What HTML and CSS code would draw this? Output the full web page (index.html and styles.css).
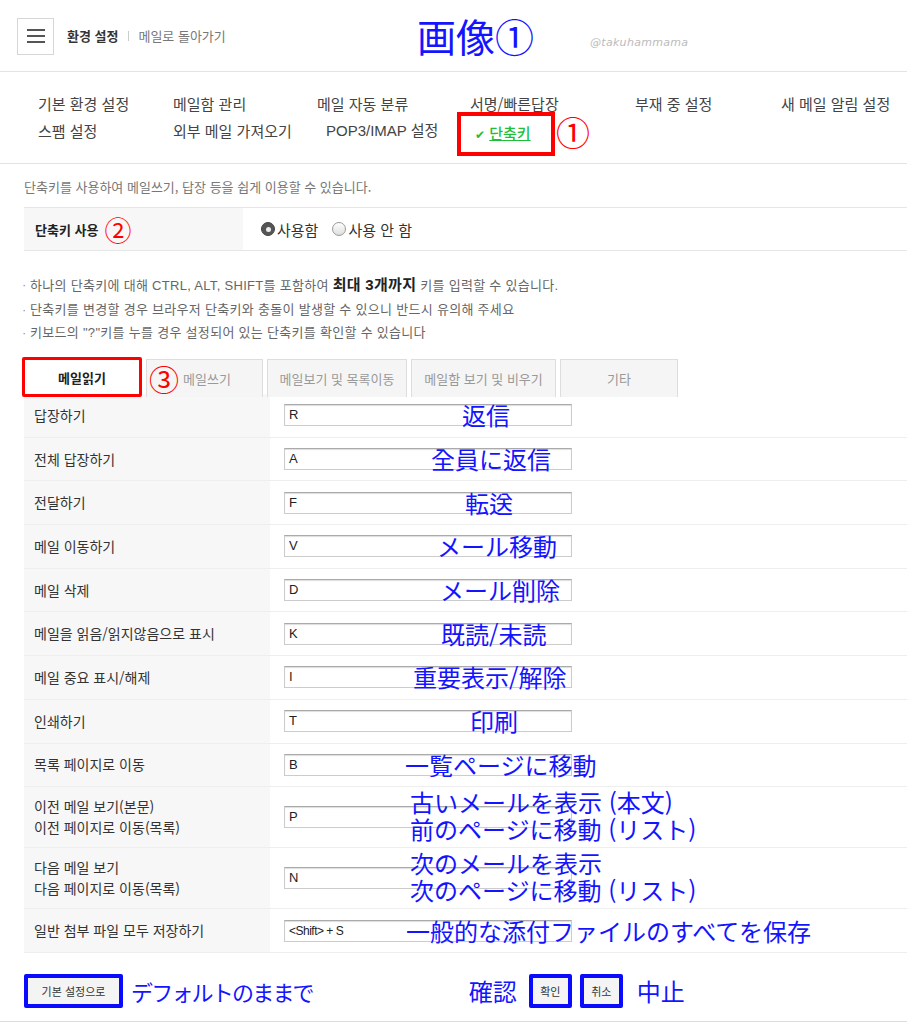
FILE: index.html
```html
<!DOCTYPE html>
<html lang="ko">
<head>
<meta charset="utf-8">
<link rel="stylesheet" href="styles.css">
</head>
<body>
<header class="top">
  <div class="menu-btn"><span></span><span></span><span></span></div>
  <span class="title">환경 설정</span>
  <span class="sep"></span>
  <span class="back">메일로 돌아가기</span>
  <span class="ann-big">画像①</span>
  <span class="credit">@takuhammama</span>
</header>

<nav class="nav">
  <div class="nav-row">
    <a class="c1">기본 환경 설정</a>
    <a class="c2">메일함 관리</a>
    <a class="c3">메일 자동 분류</a>
    <a class="c4">서명/빠른답장</a>
    <a class="c5">부재 중 설정</a>
    <a class="c6">새 메일 알림 설정</a>
  </div>
  <div class="nav-row">
    <a class="c1">스팸 설정</a>
    <a class="c2">외부 메일 가져오기</a>
    <a class="c3b">POP3/IMAP 설정</a>
    <a class="c4b active"><span class="check">✔</span> <u>단축키</u></a>
    <span class="circ red nav-circ">①</span>
  </div>
</nav>

<main class="content">
  <p class="desc">단축키를 사용하여 메일쓰기, 답장 등을 쉽게 이용할 수 있습니다.</p>
  <div class="use-row">
    <div class="use-label">단축키 사용 <span class="circ red small-circ">②</span></div>
    <div class="use-opts">
      <span class="radio on"></span><span class="opt">사용함</span>
      <span class="radio"></span><span class="opt">사용 안 함</span>
    </div>
  </div>
  <ul class="notes">
    <li>하나의 단축키에 대해 CTRL, ALT, SHIFT를 포함하여 <b>최대 3개까지</b> 키를 입력할 수 있습니다.</li>
    <li>단축키를 변경할 경우 브라우저 단축키와 충돌이 발생할 수 있으니 반드시 유의해 주세요</li>
    <li>키보드의 "?"키를 누를 경우 설정되어 있는 단축키를 확인할 수 있습니다</li>
  </ul>

  <div class="tabs">
    <div class="tab active">메일읽기</div>
    <div class="tab t2"><span class="circ red tab-circ">③</span>메일쓰기</div>
    <div class="tab t3">메일보기 및 목록이동</div>
    <div class="tab t4">메일함 보기 및 비우기</div>
    <div class="tab t5">기타</div>
  </div>

  <div class="keys">
    <div class="krow"><div class="kl">답장하기</div><div class="kr"><div class="inp">R</div><span class="ann" style="left:192px">返信</span></div></div>
    <div class="krow"><div class="kl">전체 답장하기</div><div class="kr"><div class="inp">A</div><span class="ann" style="left:161px">全員に返信</span></div></div>
    <div class="krow"><div class="kl">전달하기</div><div class="kr"><div class="inp">F</div><span class="ann" style="left:195px">転送</span></div></div>
    <div class="krow"><div class="kl">메일 이동하기</div><div class="kr"><div class="inp">V</div><span class="ann" style="left:167px">メール移動</span></div></div>
    <div class="krow"><div class="kl">메일 삭제</div><div class="kr"><div class="inp">D</div><span class="ann" style="left:170px">メール削除</span></div></div>
    <div class="krow"><div class="kl">메일을 읽음/읽지않음으로 표시</div><div class="kr"><div class="inp">K</div><span class="ann" style="left:171px">既読/未読</span></div></div>
    <div class="krow"><div class="kl">메일 중요 표시/해제</div><div class="kr"><div class="inp">I</div><span class="ann" style="left:143px">重要表示/解除</span></div></div>
    <div class="krow"><div class="kl">인쇄하기</div><div class="kr"><div class="inp">T</div><span class="ann" style="left:200px">印刷</span></div></div>
    <div class="krow"><div class="kl">목록 페이지로 이동</div><div class="kr"><div class="inp">B</div><span class="ann" style="left:135px">一覧ページに移動</span></div></div>
    <div class="krow tall"><div class="kl">이전 메일 보기(본문)<br>이전 페이지로 이동(목록)</div><div class="kr"><div class="inp">P</div><span class="ann two" style="left:140px">古いメールを表示 (本文)<br>前のページに移動 (リスト)</span></div></div>
    <div class="krow tall"><div class="kl">다음 메일 보기<br>다음 페이지로 이동(목록)</div><div class="kr"><div class="inp">N</div><span class="ann two" style="left:140px">次のメールを表示<br>次のページに移動 (リスト)</span></div></div>
    <div class="krow"><div class="kl">일반 첨부 파일 모두 저장하기</div><div class="kr"><div class="inp small">&lt;Shift&gt; + S</div><span class="ann" style="left:136px">一般的な添付ファイルのすべてを保存</span></div></div>
  </div>

  <div class="bottom">
    <button class="btn blue-box wide">기본 설정으로</button>
    <span class="ann-inline first">デフォルトのままで</span>
    <span class="spacer"></span>
    <span class="ann-inline">確認</span>
    <button class="btn blue-box sm">확인</button>
    <button class="btn blue-box sm">취소</button>
    <span class="ann-inline">中止</span>
  </div>
</main>
<div class="endline"></div>
</body>
</html>
```

FILE: styles.css
```css
* { box-sizing: border-box; }
html, body { margin: 0; padding: 0; background: #fff; }
body {
  width: 907px;
  height: 1024px;
  overflow: hidden;
  position: relative;
  font-family: "Liberation Sans", "Noto Sans CJK KR", sans-serif;
  color: #333;
}

.top {
  height: 72px;
  border-bottom: 1px solid #e3e3e3;
  display: flex;
  align-items: center;
  padding-left: 17px;
  position: relative;
}
.menu-btn {
  width: 37px; height: 37px;
  border: 1px solid #d6d6d6;
  display: flex; flex-direction: column; justify-content: center; align-items: center;
  gap: 4px;
  margin-top: 1px;
}
.menu-btn span { width: 18px; height: 2px; background: #555; display: block; }
.title { margin-left: 13px; font-size: 13px; font-weight: bold; color: #333; }
.sep { width: 1px; height: 10px; background: #ccc; margin: 0 9px 0 10px; }
.back { font-size: 13px; color: #777; }
.ann-big {
  position: absolute; left: 417px; top: 10px;
  font-family: "Noto Sans CJK JP", sans-serif;
  font-size: 39px; color: #1414ff; line-height: 50px;
}
.credit {
  position: absolute; left: 590px; top: 36px;
  font-size: 11px; font-style: italic; color: #bbb; letter-spacing: 0.3px;
  font-family: "DejaVu Sans", sans-serif;
}

.nav {
  height: 92px;
  border-bottom: 1px solid #e3e3e3;
  padding-top: 22px;
  position: relative;
}
.nav-row { position: relative; height: 27px; font-size: 15px; font-family: "Noto Sans CJK KR", sans-serif; color: #444; }
.nav-row a { position: absolute; top: 0; line-height: 20px; white-space: nowrap; }
.nav-row .c1 { left: 38px; }
.nav-row .c2 { left: 173px; }
.nav-row .c3 { left: 317px; }
.nav-row .c3b { left: 326px; font-family: "Liberation Sans", "Noto Sans CJK KR", sans-serif; }
.nav-row .c4 { left: 470px; }
.nav-row .c5 { left: 635px; }
.nav-row .c6 { left: 781px; }
.nav-row .active {
  color: #1fbf3a;
  font-weight: 500;
  outline: 4px solid #f00;
  padding: 7px 20px 8px 14px;
  top: -5px;
  left: 461px;
  line-height: 20px;
}
.check { font-size: 12px; }
.circ { font-family: "Noto Sans CJK JP", sans-serif; line-height: 1; }
.red { color: #f00; }
.nav-circ { position: absolute; left: 556px; top: -6px; font-size: 34px; }

.content { padding: 0 0 0 24px; }
.desc { margin: 15px 0 0 0; font-size: 13px; color: #777; font-family: "Noto Sans CJK KR", sans-serif; line-height: 16px; }
.use-row {
  margin-top: 12px;
  height: 44px;
  display: flex;
  border-top: 1px solid #e6e6e6;
  border-bottom: 1px solid #e6e6e6;
}
.use-label {
  width: 219px; background: #f7f7f7;
  display: flex; align-items: center;
  padding-left: 11px;
  font-size: 13px; font-weight: bold; color: #222;
  font-family: "Noto Sans CJK KR", sans-serif;
}
.small-circ { font-size: 27px; margin-left: 6px; font-weight: normal; }
.use-opts {
  display: flex; align-items: center; padding-left: 18px;
  font-size: 15px; font-family: "Noto Sans CJK KR", sans-serif; color: #333;
}
.radio {
  width: 14px; height: 14px; border-radius: 50%;
  border: 1px solid #999; background: linear-gradient(#fff, #ddd);
  display: inline-block; position: relative;
}
.radio.on { background: #555; border-color: #444; }
.radio.on::after {
  content: ""; position: absolute; left: 3.5px; top: 3.5px; width: 5px; height: 5px; border-radius: 50%; background: #eee;
}
.opt { margin: 0 14px 0 2px; }

.notes {
  list-style: none; margin: 26px 0 0 0; padding: 0;
  font-size: 13px; color: #666; font-family: "Liberation Sans", "Noto Sans CJK KR", sans-serif;
  letter-spacing: 0.3px;
}
.notes li { line-height: 16px; margin-bottom: 7.5px; position: relative; padding-left: 8px; margin-left: -2px; }
.notes li::before { content: "·"; position: absolute; left: 0; top: 0; color: #999; }
.notes b { font-size: 15px; color: #222; }

.tabs {
  display: flex; gap: 4px; margin-top: 16px; margin-left: -2px; height: 40px;
  font-family: "Noto Sans CJK KR", sans-serif;
}
.tab {
  height: 38px; display: flex; align-items: center; justify-content: center;
  border: 1px solid #ddd; border-bottom: none; background: #f5f5f5;
  font-size: 13px; color: #999; position: relative; margin-top: 2px;
}
.tab.active { width: 120px; background: #fff; color: #222; font-weight: bold; border: 3px solid #f00; border-radius: 2px; height: 40px; margin-top: 0; }
.t2 { width: 117px; padding-left: 36px; justify-content: flex-start; }
.t3 { width: 140px; }
.t4 { width: 145px; }
.t5 { width: 118px; }
.tab-circ { position: absolute; left: 2px; top: 3px; font-size: 30px; font-weight: normal; }

.keys { margin-top: -3px; font-family: "Noto Sans CJK KR", sans-serif; }
.krow { display: flex; height: 43.7px; border-bottom: 1px solid #eee; }
.krow.tall { height: 61px; }
.kl {
  width: 246px; background: #f7f7f7;
  display: flex; align-items: center; padding-left: 10px;
  font-size: 14px; color: #333; line-height: 21px;
}
.kr { flex: 1; display: flex; align-items: center; position: relative; padding-left: 14px; }
.inp {
  width: 288px; height: 22px;
  border: 1px solid #ccc; border-top-color: #aaa;
  box-shadow: inset 0 1px 1px #ddd;
  font-family: "Liberation Sans", sans-serif; font-size: 13px; color: #222;
  padding-left: 4px; line-height: 20px;
}
.inp.small { font-size: 12px; letter-spacing: -0.5px; }
.ann {
  position: absolute; top: 50%; transform: translateY(-50%);
  font-family: "Noto Sans CJK JP", sans-serif; font-size: 24px; color: #1414ff;
  white-space: nowrap; line-height: 28px;
}
.ann.two { line-height: 27px; margin-top: -2px; }

.bottom {
  display: flex; align-items: center; height: 34px; margin-top: 21px;
}
.btn {
  background: #f4f4f4; font-family: "Noto Sans CJK KR", sans-serif; font-size: 11px; color: #333;
  height: 34px; padding: 0 6px; cursor: pointer;
}
.blue-box { border: 4px solid #0a0aff; border-radius: 2px; }
.btn.wide { width: 99px; }
.btn.sm { width: 43px; padding: 0; margin-right: 8px; }
.ann-inline { font-family: "Noto Sans CJK JP", sans-serif; font-size: 24px; color: #1414ff; margin: 0 12px 0 6px; }
.ann-inline.first { font-size: 22px; letter-spacing: -1.8px; margin: 0 0 0 8px; }
.spacer { width: 150px; }
.endline { position: absolute; top: 1021px; left: 0; width: 907px; height: 1px; background: #ddd; }
```
